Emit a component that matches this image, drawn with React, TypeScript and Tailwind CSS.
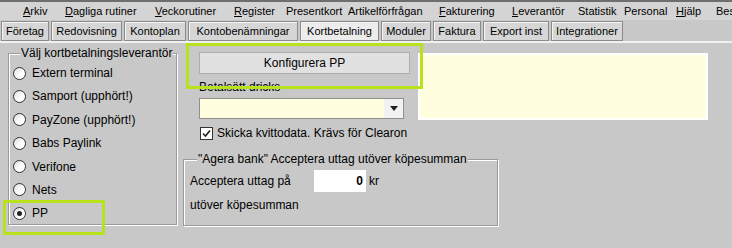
import React from 'react'

const menu = [
  { label: 'Arkiv', u: true, w: 'w-[42px]' },
  { label: 'Dagliga rutiner', u: true, w: 'w-[90px]' },
  { label: 'Veckorutiner', u: true, w: 'w-[79px]' },
  { label: 'Register', u: true, w: 'w-[52px]' },
  { label: 'Presentkort', u: false, w: 'w-[62px]' },
  { label: 'Artikelförfrågan', u: false, w: 'w-[91px]' },
  { label: 'Fakturering', u: true, w: 'w-[73px]' },
  { label: 'Leverantör', u: true, w: 'w-[66px]' },
  { label: 'Statistik', u: false, w: 'w-[46px]' },
  { label: 'Personal', u: false, w: 'w-[52px]' },
  { label: 'Hjälp', u: true, w: 'w-[40px]' },
  { label: 'Bes', u: false, w: 'w-[16px]' },
]

const tabs = [
  { label: 'Företag', w: 'w-[48px]' },
  { label: 'Redovisning', w: 'w-[71px]' },
  { label: 'Kontoplan', w: 'w-[62px]' },
  { label: 'Kontobenämningar', w: 'w-[110px]' },
  { label: 'Kortbetalning', w: 'w-[79px]', active: true },
  { label: 'Moduler', w: 'w-[50px]' },
  { label: 'Faktura', w: 'w-[48px]' },
  { label: 'Export inst', w: 'w-[66px]' },
  { label: 'Integrationer', w: 'w-[72px]' },
]

const providers = ['Extern terminal', 'Samport (upphört!)', 'PayZone (upphört!)', 'Babs Paylink', 'Verifone', 'Nets', 'PP']

const Radio = ({ checked }: { checked?: boolean }) => (
  <span className="w-[13px] h-[13px] rounded-full border border-[#333] bg-[linear-gradient(135deg,#dcdcdc_0%,#ffffff_60%)] flex items-center justify-center shrink-0">
    {checked && <span className="w-[5px] h-[5px] rounded-full bg-[#222]" />}
  </span>
)

const etched = 'border border-[#9a9a9a] shadow-[inset_1px_1px_0_#fff,1px_1px_0_#fff]'

export default function App() {
  return (
    <div className="relative w-[732px] h-[248px] overflow-hidden bg-[#c8c8c8] text-[12px] leading-[14px] text-black font-['Liberation_Sans',Arial,sans-serif]">
      <div className="h-[2px] bg-[#6e6e6e]" />
      {/* menu */}
      <div className="h-[18px] bg-[#d4d4d4] flex items-center pl-[23px] text-[11px] whitespace-nowrap">
        {menu.map((m) => (
          <span key={m.label} className={`${m.w} shrink-0`}>
            {m.u ? (
              <>
                <span className="underline">{m.label[0]}</span>
                {m.label.slice(1)}
              </>
            ) : (
              m.label
            )}
          </span>
        ))}
      </div>
      {/* tabs */}
      <div className="h-[21px] flex items-end gap-[2px] pl-[1px] text-[11px]">
        {tabs.map((t) => (
          <div
            key={t.label}
            className={`${t.w} h-[20px] shrink-0 flex items-center justify-center border border-[#8c8c8c] shadow-[inset_1px_1px_0_#f4f4f4] whitespace-nowrap ${t.active ? 'bg-[#ececec]' : 'bg-[#d6d6d6]'}`}
          >
            {t.label}
          </div>
        ))}
      </div>
      <div className="h-[2px] bg-[#f0f0f0]" />

      {/* body */}
      <div className="flex">
        <fieldset className={`ml-[8px] mt-[3px] w-[169px] h-[179px] ${etched} pl-[4px]`}>
          <legend className="ml-[7px] px-[1px] bg-[#c8c8c8]">Välj kortbetalningsleverantör</legend>
          <div className="flex flex-col gap-[9.4px] mt-[6px]">
            {providers.map((p) => (
              <label key={p} className="flex items-center gap-[6px] h-[14px]">
                <Radio checked={p === 'PP'} />
                <span>{p}</span>
              </label>
            ))}
          </div>
        </fieldset>

        <div className="ml-[6px] flex flex-col">
          <div className="flex items-start pl-[16px] pt-[9px]">
            <div className="flex flex-col">
              <button className="w-[211px] h-[22px] bg-[#e1e1e1] border border-[#adadad] flex items-center justify-center">
                Konfigurera PP
              </button>
              <span className="mt-[6px]">Betalsätt dricks</span>
              <div className="mt-[4px] w-[205px] h-[21px] border border-[#8f8f8f] bg-[#ffffe0] flex justify-end">
                <div className="w-[19px] h-full bg-[#f2f2f2] flex items-center justify-center">
                  <span className="w-0 h-0 border-l-[4px] border-r-[4px] border-t-[5px] border-l-transparent border-r-transparent border-t-[#222]" />
                </div>
              </div>
              <label className="mt-[7px] flex items-center gap-[4px] pl-[1px]">
                <span className="w-[13px] h-[13px] border border-[#333] bg-white flex items-center justify-center">
                  <svg width="9" height="9" viewBox="0 0 9 9">
                    <path d="M1 4.5 L3.5 7 L8 1.5" fill="none" stroke="#222" strokeWidth="1.6" />
                  </svg>
                </span>
                <span>Skicka kvittodata. Krävs för Clearon</span>
              </label>
            </div>
            <div className="ml-[8px] mt-[1px] w-[290px] h-[67px] bg-[#ffffdf] border-2 border-white" />
          </div>

          <fieldset className={`mt-[12px] w-[315px] h-[74px] ${etched} pl-[6px]`}>
            <legend className="ml-[7px] px-[1px] bg-[#c8c8c8]">"Agera bank" Acceptera uttag utöver köpesumman</legend>
            <div className="mt-[4px] flex items-center">
              <span className="w-[124px]">Acceptera uttag på</span>
              <div className="w-[52px] h-[22px] bg-white flex items-center justify-end pr-[3px] font-bold">0</div>
              <span className="ml-[3px]">kr</span>
            </div>
            <div className="mt-[6px]">utöver köpesumman</div>
          </fieldset>
        </div>
      </div>

      {/* highlight annotations */}
      <div className="absolute left-[3px] top-[200px] w-[102px] h-[35px] border-[3px] border-[#b8e21c]" />
      <div className="absolute left-[186px] top-[43px] w-[237px] h-[46px] border-[3px] border-[#b8e21c]" />
    </div>
  )
}
